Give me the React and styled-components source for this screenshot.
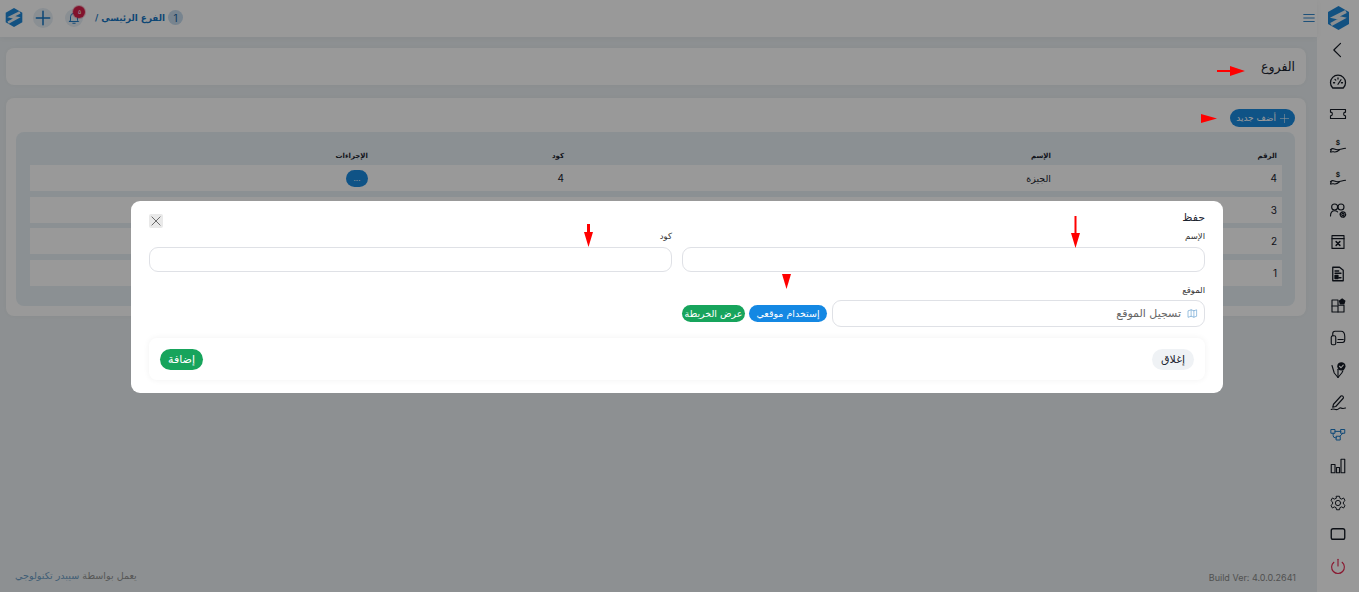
import styled, { createGlobalStyle } from 'styled-components';

const GlobalStyle = createGlobalStyle`
  * { box-sizing: border-box; }
  html, body { margin: 0; padding: 0; height: 100%; overflow: hidden; }
  body {
    font-family: "DejaVu Sans", "Noto Sans", sans-serif;
    background: #ebf0f3;
    color: #1c2430;
  }
`;

const Shell = styled.div`
  direction: rtl;
  display: flex;
  width: 100%;
  height: 592px;
`;

const Sidebar = styled.aside`
  width: 42px;
  flex-shrink: 0;
  background: #fff;
  display: flex;
  flex-direction: column;
  align-items: center;
  padding-top: 6px;
`;

const SideLogo = styled.div`
  height: 28px;
`;

const SideList = styled.div`
  display: flex;
  flex-direction: column;
  align-items: center;
`;

const SideItem = styled.div`
  height: ${(p) => p.$h || 32}px;
  width: 42px;
  display: flex;
  align-items: ${(p) => p.$end ? 'flex-end' : 'center'};
  padding-bottom: ${(p) => p.$end ? '6px' : '0'};
  justify-content: center;
  color: ${(p) => p.$color || '#141a24'};
`;

const Main = styled.div`
  flex: 1;
  min-width: 0;
  display: flex;
  flex-direction: column;
`;

const TopBar = styled.header`
  height: 37px;
  background: #fff;
  display: flex;
  align-items: center;
  justify-content: space-between;
  padding: 0 0 2px 5px;
  box-shadow: 0 1px 6px rgba(0, 0, 0, 0.04);
`;

const Burger = styled.div`
  color: #1676c4;
  display: flex;
  margin-right: 1px;
`;

const TopLeft = styled.div`
  display: flex;
  align-items: center;
`;

const BranchNo = styled.span`
  width: 15px;
  height: 15px;
  border-radius: 50%;
  background: #c6dcee;
  color: #14609e;
  font: 10px "Inter", sans-serif;
  display: flex;
  align-items: center;
  justify-content: center;
`;

const BranchName = styled.span`
  color: #1676c4;
  font-size: 8.8px;
  font-weight: 700;
  margin: 0 3px 0 12px;
  white-space: nowrap;
`;

const RoundIcon = styled.div`
  position: relative;
  width: ${(p) => p.$size}px;
  height: ${(p) => p.$size}px;
  border-radius: 50%;
  background: #e6eef5;
  color: #1676c4;
  display: flex;
  align-items: center;
  justify-content: center;
  margin-left: ${(p) => p.$gap}px;
`;

const Badge = styled.span`
  position: absolute;
  top: -3px;
  right: -2px;
  width: 12px;
  height: 12px;
  border-radius: 50%;
  background: #d81f4a;
  box-shadow: 0 0 0 1px rgba(216, 31, 74, 0.3);
  color: #fff;
  font: 6px "Inter", sans-serif;
  display: flex;
  align-items: center;
  justify-content: center;
`;

const Content = styled.main`
  flex: 1;
  display: flex;
  flex-direction: column;
  padding: 11px 11px 0 6px;
`;

const Card = styled.section`
  background: #fff;
  border-radius: 8px;
  box-shadow: 0 0 4px rgba(0, 0, 0, 0.03);
`;

const TitleCard = styled(Card)`
  height: 37px;
  display: flex;
  align-items: center;
  padding: 0 11px;
  margin-bottom: 13px;
  font-size: 12.5px;
  font-weight: 400;
`;

const ListCard = styled(Card)`
  padding: 11px 11px 10px 10px;
`;

const AddButton = styled.button`
  display: flex;
  align-items: center;
  gap: 3px;
  height: 18px;
  width: 65px;
  border: 0;
  border-radius: 9px;
  background: #1a8ae0;
  color: #fff;
  font-family: inherit;
  font-size: 9px;
  padding: 0 5px;
  margin-bottom: 5px;
`;

const TablePanel = styled.div`
  background: #e8f1f6;
  border-radius: 8px;
  padding: 13px 13px 20px 14px;
  display: flex;
  flex-direction: column;
`;

const Row = styled.div`
  display: grid;
  grid-template-columns: 226px 487px 196px 1fr;
  align-items: center;
  height: ${(p) => p.$head ? 20 : 26}px;
  background: ${(p) => p.$head ? 'transparent' : '#fff'};
  margin-bottom: ${(p) => p.$head ? 0 : 5.5}px;
  padding-top: ${(p) => p.$head ? 2 : 0}px;
  &:last-child { margin-bottom: 0; }
`;

const Cell = styled.div`
  padding-right: 5px;
  font-size: ${(p) => p.$head ? 7 : 9.5}px;
  font-weight: ${(p) => p.$head ? 700 : 400};
  color: #1c2430;
`;

const Num = styled.span`
  font-family: "Inter", sans-serif;
  font-size: 10px;
`;

const MoreButton = styled.button`
  display: block;
  width: 22px;
  height: 17px;
  border: 0;
  border-radius: 9px;
  background: #1a8ae0;
  color: #fff;
  font: 8px "Inter", sans-serif;
  padding: 0;
  line-height: 14px;
`;

const Foot = styled.footer`
  margin-top: auto;
  height: 22px;
  padding: 0 10px 0 9px;
  display: flex;
  align-items: flex-start;
  justify-content: space-between;
  font-size: 9.6px;
  color: #909090;
`;

const Build = styled.span`
  direction: ltr;
  font: 9px "Inter", sans-serif;
  color: #888;
  padding-top: 2px;
`;

const Brand = styled.span`
  color: #6a9cc4;
`;

const Backdrop = styled.div`
  position: fixed;
  inset: 0;
  background: rgba(0, 0, 0, 0.4);
  direction: rtl;
  display: flex;
  align-items: center;
  justify-content: center;
  padding: 2px 5px 0 0;
`;

const Modal = styled.div`
  position: relative;
  width: 1092px;
  height: 192px;
  background: #fff;
  border-radius: 9px;
  padding: 13px 18px 0;
  display: flex;
  flex-direction: column;
`;

const ModalHead = styled.div`
  display: flex;
  align-items: flex-start;
  justify-content: space-between;
  height: 18px;
  font-size: 11px;
  font-weight: 500;
  line-height: 7px;
`;

const CloseBox = styled.div`
  width: 14px;
  height: 14px;
  border-radius: 2px;
  background: #e9e9e9;
  color: #444;
  display: flex;
  align-items: center;
  justify-content: center;
`;

const FieldRow = styled.div`
  display: grid;
  grid-template-columns: 1fr 1fr;
  gap: 10px;
`;

const Field = styled.div`
  display: flex;
  flex-direction: column;
`;

const Label = styled.label`
  display: block;
  font-size: 8.5px;
  color: #333;
  height: 15px;
  line-height: 8px;
`;

const TextBox = styled.input`
  height: 25px;
  border: 1px solid #dfe1e6;
  border-radius: 9px;
  background: #fff;
  outline: none;
`;

const LocationLabel = styled(Label)`
  margin-top: 14px;
  height: 14px;
`;

const LocationRow = styled.div`
  display: flex;
  align-items: center;
  height: 27px;
`;

const LocationBox = styled.div`
  width: 373px;
  height: 27px;
  border: 1px solid #dfe1e6;
  border-radius: 9px;
  display: flex;
  align-items: center;
  gap: 6px;
  padding: 0 6px;
  font-size: 11px;
  color: #666;
  margin-left: 5px;
`;

const MapIcon = styled.span`
  color: #4a90c8;
  display: flex;
`;

const Pill = styled.button`
  height: 17px;
  border: 0;
  border-radius: 9px;
  background: ${(p) => p.$bg};
  color: #fff;
  font-family: inherit;
  font-size: 9.5px;
  width: ${(p) => p.$w}px;
  padding: 0;
  margin-left: 4px;
  white-space: nowrap;
`;

const ModalFoot = styled.div`
  margin-top: 11px;
  height: 42px;
  border-radius: 8px;
  box-shadow: 0 0 6px rgba(0, 0, 0, 0.06);
  display: flex;
  align-items: center;
  justify-content: space-between;
  padding: 0 11px;
`;

const FootButton = styled.button`
  height: 21px;
  width: ${(p) => p.$w}px;
  border: 0;
  border-radius: 11px;
  background: ${(p) => p.$bg};
  color: ${(p) => p.$fg};
  font-family: inherit;
  font-size: 11px;
  padding: 0;
`;

const Mark = styled.svg`
  position: fixed;
  left: ${(p) => p.$x}px;
  top: ${(p) => p.$y}px;
`;

const Icon = ({ size = 18, children, sw = 1.5 }) => (
  <svg width={size} height={size} viewBox="0 0 24 24" fill="none" stroke="currentColor" strokeWidth={sw} strokeLinecap="round" strokeLinejoin="round">
    {children}
  </svg>
);

const Logo = ({ w = 21, h = 24 }) => (
  <svg width={w} height={h} viewBox="0 0 21 24">
    <polygon points="10.5,0 21,6 21,18 10.5,24 0,18 0,6" fill="#1e88d8" />
    <path d="M18 5.5 L7 11 L14 12.5 L3 18.5" fill="none" stroke="#e9eef2" strokeWidth="3.4" />
  </svg>
);

const hand = (
  <>
    <path d="M2 17c2-2 3-2 5-1s3 1 5 1 5-1 10-2" />
    <path d="M3 20c2-1 3 0 5 0s4-1 6-3" />
    <path d="M3 17l-1 3" />
    <text x="12" y="11" fontSize="9" fontWeight="700" fontFamily="Inter, sans-serif" fill="currentColor" stroke="none" textAnchor="middle">$</text>
  </>
);

const sideIcons = [
  { key: 'back', size: 20, sw: 1.4, body: <path d="M15 4l-8 8 8 8" /> },
  { key: 'gauge', sw: 1.7, body: <><path d="M5 20a10 10 0 1 1 14 0z" /><path d="M12 15l4-6" /><path d="M6 13h1.500M8 8.500l1 1M12 6.500v1.500M18 13h-1.500" /></> },
  { key: 'ticket', body: <path d="M2 6h20v3.500a2.500 2.500 0 0 0 0 5V18H2v-3.500a2.500 2.500 0 0 0 0-5z" /> },
  { key: 'hand1', body: hand },
  { key: 'hand2', body: hand },
  { key: 'users', body: <><circle cx="7.500" cy="8" r="4" /><path d="M2 20c0-4 2-7 5.500-7 1.500 0 3 .6 4 1.500" /><circle cx="16" cy="8" r="4" /><circle cx="18.500" cy="18" r="1.500" /><circle cx="18.500" cy="18" r="3.500" strokeDasharray="2 1.500" strokeWidth="2" /></> },
  { key: 'window', body: <><rect x="4" y="3.500" width="16" height="17" /><path d="M4 7.500h16" /><path d="M9.500 11.500l5 5M14.500 11.500l-5 5" strokeWidth="2" /></> },
  { key: 'doc', sw: 1.7, body: <><path d="M5 3h9l5 4v14H5z" /><path d="M8 8h5M8 11h8M13 17h3" /><rect x="8" y="14" width="4" height="4" fill="currentColor" /></> },
  { key: 'apps', body: <><path d="M12 4H4v16h16v-9h-8V4z" /><path d="M4 12h8M12 12v8" /><path d="M17.500 1.500l4.500 3.500-1.500 5h-6L13 5z" fill="currentColor" stroke="none" /></> },
  { key: 'device', body: <><rect x="3" y="9" width="6" height="12" rx="2" /><path d="M5 9V6a3 3 0 0 1 3-3h8c3 0 5 3 5 7v4c0 3-1 4-3 4h-7" /><path d="M12 14h7" /></> },
  { key: 'pen', body: <><path d="M4 6l3 10 5 6 5-6 1.500-3" /><path d="M12 11v11" /><circle cx="16.500" cy="7" r="5.500" fill="currentColor" stroke="none" /><path d="M14 7l2 2 3-3.500" stroke="#fff" /></> },
  { key: 'sign', body: <><path d="M6 15L16 4c2-1 4 1 3 3L9 18l-4 1z" /><path d="M3 22c3-2 5 1 8 0s3-3 5-2 3 1 6 0" /></> },
  { key: 'tree', color: '#1676c4', sw: 1.3, body: <><rect x="3" y="6" width="5" height="5" /><rect x="16" y="6" width="5" height="5" /><rect x="10" y="15" width="5" height="5" /><path d="M8 8.500h8M5.500 11v3a3 3 0 0 0 3 3H10M18.500 11L14.500 15" /></> },
  { key: 'bars', body: <><rect x="3" y="10" width="5" height="11" /><rect x="10" y="14" width="4" height="7" /><rect x="16" y="3" width="5" height="18" /></> },
  { key: 'gear', h: 36, end: true, sw: 1.3, body: <><circle cx="12" cy="12" r="3.500" /><path d="M10 3h4l.6 2.800 2.300 1 2.500-1.500 2 3.400-2.200 2v2.600l2.200 2-2 3.400-2.500-1.500-2.300 1L14 21h-4l-.6-2.800-2.300-1-2.500 1.500-2-3.400 2.200-2v-2.600l-2.200-2 2-3.400 2.500 1.500 2.300-1z" /></> },
  { key: 'screen', sw: 1.8, body: <rect x="3" y="5" width="18" height="14" rx="2.500" /> },
  { key: 'power', color: '#e5264f', body: <><path d="M12 3v9" /><path d="M6.500 7a8.500 8.500 0 1 0 11 0" /></> },
];

const rows = [
  { no: '4', name: 'الجيزة', code: '4', action: true },
  { no: '3' },
  { no: '2' },
  { no: '1' },
];

const App = () => (
  <>
    <GlobalStyle />
    <Shell>
      <Sidebar>
        <SideLogo><Logo /></SideLogo>
        <SideList>
          {sideIcons.map((it) => (
            <SideItem key={it.key} $color={it.color} $h={it.h} $end={it.end}>
              <Icon size={it.size || 18} sw={it.sw}>{it.body}</Icon>
            </SideItem>
          ))}
        </SideList>
      </Sidebar>
      <Main>
        <TopBar>
          <Burger>
            <Icon size={14} sw={1.5}><path d="M3 6h18M3 12h18M3 18h18" /></Icon>
          </Burger>
          <TopLeft>
            <BranchNo>1</BranchNo>
            <BranchName>الفرع الرئيسي /</BranchName>
            <RoundIcon $size={18} $gap={12}>
              <Icon size={14} sw={1.6}>
                <path d="M6 16V10a6 6 0 0 1 12 0v6l2 2H4z" />
                <path d="M10 21h4" />
              </Icon>
              <Badge>٥</Badge>
            </RoundIcon>
            <RoundIcon $size={20} $gap={10}>
              <Icon size={20} sw={1.8}><path d="M12 4v16M4 12h16" /></Icon>
            </RoundIcon>
            <Logo w={18} h={19} />
          </TopLeft>
        </TopBar>
        <Content>
          <TitleCard>الفروع</TitleCard>
          <ListCard>
            <AddButton>
              <Icon size={11} sw={1.2}><path d="M12 3v18M3 12h18" /></Icon>
              أضف جديد
            </AddButton>
            <TablePanel>
              <Row $head>
                <Cell $head>الرقم</Cell>
                <Cell $head>الإسم</Cell>
                <Cell $head>كود</Cell>
                <Cell $head>الإجراءات</Cell>
              </Row>
              {rows.map((r) => (
                <Row key={r.no}>
                  <Cell><Num>{r.no}</Num></Cell>
                  <Cell>{r.name}</Cell>
                  <Cell><Num>{r.code}</Num></Cell>
                  <Cell>{r.action && <MoreButton>...</MoreButton>}</Cell>
                </Row>
              ))}
            </TablePanel>
          </ListCard>
          <Foot>
            <Build>Build Ver: 4.0.0.2641</Build>
            <span>يعمل بواسطة <Brand>سيبدر تكنولوجي</Brand></span>
          </Foot>
        </Content>
      </Main>
    </Shell>
    <Backdrop>
      <Modal>
        <ModalHead>
          <span>حفظ</span>
          <CloseBox>
            <Icon size={14} sw={1.3}><path d="M5 5l14 14M19 5L5 19" /></Icon>
          </CloseBox>
        </ModalHead>
        <FieldRow>
          <Field>
            <Label>الإسم</Label>
            <TextBox />
          </Field>
          <Field>
            <Label>كود</Label>
            <TextBox />
          </Field>
        </FieldRow>
        <LocationLabel>الموقع</LocationLabel>
        <LocationRow>
          <LocationBox>
            <MapIcon>
              <Icon size={11} sw={1.2}><path d="M3 6l6-2 6 2 6-2v14l-6 2-6-2-6 2z" /><path d="M9 4v14M15 6v14" /></Icon>
            </MapIcon>
            تسجيل الموقع
          </LocationBox>
          <Pill $bg="#1488e3" $w={78}>إستخدام موقعي</Pill>
          <Pill $bg="#17a45c" $w={63}>عرض الخريطة</Pill>
        </LocationRow>
        <ModalFoot>
          <FootButton $bg="#eff2f5" $fg="#1c2430" $w={42}>إغلاق</FootButton>
          <FootButton $bg="#17a45c" $fg="#fff" $w={43}>إضافة</FootButton>
        </ModalFoot>
      </Modal>
    </Backdrop>
    <Mark $x={1217} $y={66} width={28} height={10} fill="#f00">
      <path d="M0 4h13V0l15 5-15 5V6H0z" />
    </Mark>
    <Mark $x={1201} $y={114} width={16} height={9} fill="#f00">
      <path d="M0 0l16 4.500L0 9z" />
    </Mark>
    <Mark $x={1071} $y={216} width={9} height={32} fill="#f00">
      <path d="M3.500 0h2v17H9l-4.500 15L0 17h3.500z" />
    </Mark>
    <Mark $x={782} $y={274} width={9} height={15} fill="#f00">
      <path d="M0 0h9l-4.500 15z" />
    </Mark>
    <Mark $x={584} $y={224} width={9} height={23} fill="#f00">
      <path d="M3 0h3v8h3l-4.500 15L0 8h3z" />
    </Mark>
  </>
);

export default App;
